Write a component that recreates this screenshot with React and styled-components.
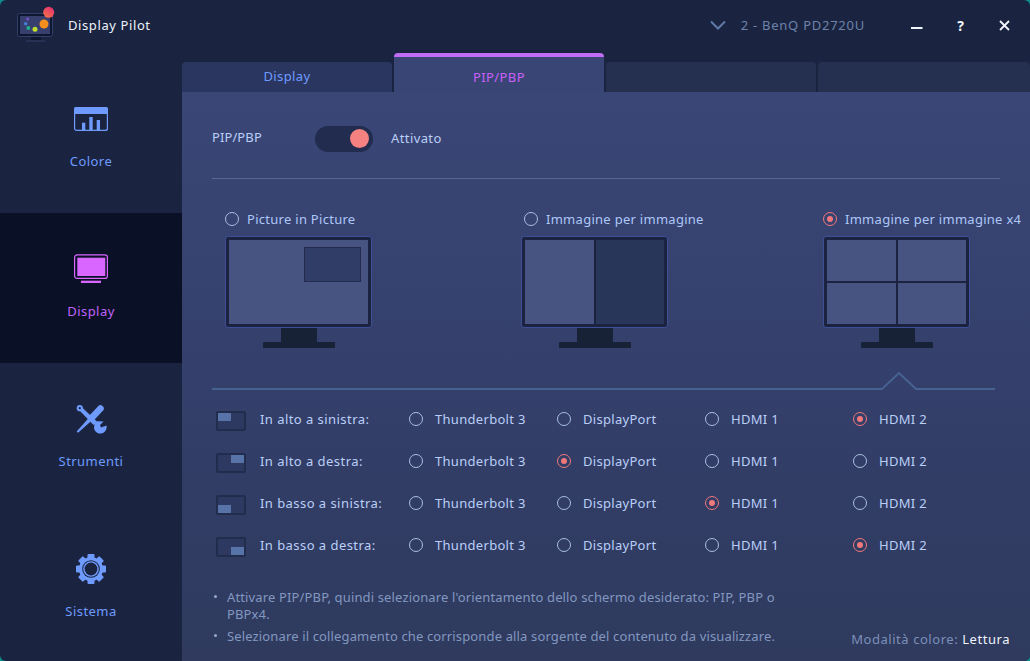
import React from 'react'
import styled, { createGlobalStyle } from 'styled-components'

const GlobalStyle = createGlobalStyle`
    html, body {
        margin: 0;
        padding: 0;
        width: 1030px;
        height: 661px;
        overflow: hidden;
        background: #0b8f8c;
    }
    * { box-sizing: border-box; }
`;

const Window = styled.div`
    display: flex;
    flex-direction: column;
    width: 1030px;
    height: 661px;
    overflow: hidden;
    border-radius: 6px;
    background: #1a2440;
    font-family: "Noto Sans", "Open Sans", sans-serif;
    font-size: 13px;
    color: #b9cff8;
`;

const TitleBar = styled.div`
    display: flex;
    align-items: center;
    height: 53px;
    flex: none;
    padding: 0 19px 3px 16px;
`;

const AppName = styled.div`
    margin-left: 12px;
    margin-top: -1px;
    font-size: 13px;
    letter-spacing: 0.6px;
    color: #eef2fb;
`;

const MonitorSelect = styled.div`
    display: flex;
    align-items: center;
    margin-left: auto;
    margin-top: -1px;
    gap: 15px;
    font-size: 13px;
    letter-spacing: 0.75px;
    color: #6d83ab;
`;

const WindowButtons = styled.div`
    display: flex;
    align-items: center;
    margin-left: 45px;
    gap: 31px;
    color: #f2f5fb;
`;

const WindowGlyph = styled.svg`
    display: block;
    width: 13px;
    height: 13px;
`;

const HelpGlyph = styled.div`
    width: 13px;
    text-align: center;
    font-size: 14px;
    font-weight: 700;
    line-height: 13px;
`;

const Body = styled.div`
    display: flex;
    flex: 1;
    min-height: 0;
`;

const Sidebar = styled.nav`
    display: flex;
    flex-direction: column;
    flex: none;
    width: 182px;
    padding-top: 10px;
`;

const NavItem = styled.div`
    display: flex;
    flex-direction: column;
    align-items: center;
    flex: none;
    height: 150px;
    padding-top: 38px;
    background: ${p => (p.$active ? '#0a1126' : 'transparent')};
    color: ${p => (p.$active ? '#d966ff' : '#6f9bff')};
`;

const NavIcon = styled.svg`
    display: block;
    width: 36px;
    height: 36px;
    flex: none;
`;

const NavLabel = styled.div`
    margin-top: 15px;
    font-size: 13px;
    letter-spacing: 0.45px;
    color: ${p => (p.$active ? '#c061fa' : 'inherit')};
`;

const Main = styled.main`
    display: flex;
    flex-direction: column;
    flex: 1;
    min-width: 0;
`;

const Tabs = styled.div`
    display: flex;
    align-items: flex-end;
    gap: 2px;
    height: 39px;
    flex: none;
`;

const Tab = styled.div`
    display: flex;
    align-items: center;
    justify-content: center;
    flex: ${p => (p.$fill ? '1' : 'none')};
    width: ${p => (p.$fill ? 'auto' : '210px')};
    height: ${p => (p.$active ? '39px' : '30px')};
    padding-bottom: 2px;
    padding-top: ${p => (p.$active ? '6px' : '0')};
    border-radius: 4px 4px 0 0;
    border-top: ${p => (p.$active ? '4px solid #c06cf4' : 'none')};
    background: ${p => (p.$active ? '#394675' : p.$first ? '#2a3660' : '#252f50')};
    color: ${p => (p.$active ? '#c860f8' : '#6f9bff')};
    font-size: 13px;
    letter-spacing: 0.4px;
`;

const Panel = styled.section`
    display: flex;
    flex-direction: column;
    flex: 1;
    min-height: 0;
    padding-left: 30px;
    background: linear-gradient(180deg, #3a4676 0%, #343f6b 50%, #2f3a5e 100%);
`;

const ToggleRow = styled.div`
    display: flex;
    align-items: center;
    height: 27px;
    margin-top: 33px;
`;

const ToggleLabel = styled.div`
    width: 103px;
    margin-top: -4px;
    letter-spacing: 0.1px;
`;

const Switch = styled.div`
    display: flex;
    align-items: center;
    justify-content: flex-end;
    width: 58px;
    height: 26px;
    padding-right: 4px;
    border-radius: 13px;
    background: #222c4f;
`;

const SwitchKnob = styled.div`
    width: 19px;
    height: 19px;
    border-radius: 50%;
    background: #f58280;
`;

const ToggleState = styled.div`
    margin-left: 18px;
    margin-top: -2px;
    letter-spacing: 0.4px;
`;

const Divider = styled.div`
    width: 788px;
    height: 1px;
    margin-top: 26px;
    background: #55698f;
`;

const Modes = styled.div`
    display: flex;
    margin-top: 31px;
    padding-left: 13px;
`;

const Mode = styled.div`
    display: flex;
    flex-direction: column;
    flex: none;
    width: 299px;
`;

const ModeOption = styled.div`
    display: flex;
    align-items: center;
    gap: 8px;
    height: 18px;
    letter-spacing: 0.28px;
    white-space: nowrap;
    color: #adc8f8;
`;

const Radio = styled.span`
    display: flex;
    align-items: center;
    justify-content: center;
    flex: none;
    width: 14px;
    height: 14px;
    border-radius: 50%;
    border: 1px solid ${p => (p.$on ? '#f0787a' : '#a9bfdf')};

    &::after {
        content: '';
        display: ${p => (p.$on ? 'block' : 'none')};
        width: 6px;
        height: 6px;
        border-radius: 50%;
        background: #f0787a;
    }
`;

const Monitor = styled.div`
    display: flex;
    flex-direction: column;
    align-items: center;
    width: 147px;
    margin: 8px 0 0 ${p => p.$shift || 0}px;
`;

const Screen = styled.div`
    position: relative;
    display: grid;
    grid-template-columns: repeat(${p => p.$cols}, 1fr);
    grid-template-rows: repeat(${p => p.$rows}, 1fr);
    gap: ${p => p.$gap || 0}px;
    width: 147px;
    height: 92px;
    padding: 3px;
    border: 1px solid #3d5096;
    border-radius: 3px;
    background: #1c2340;
`;

const Pane = styled.div`
    background: ${p => (p.$dark ? '#283759' : '#475380')};
`;

const Inset = styled.div`
    position: absolute;
    top: 10px;
    right: 10px;
    width: 57px;
    height: 35px;
    border: 1px solid #232c4d;
    background: #303d67;
`;

const StandNeck = styled.div`
    width: 36px;
    height: 14px;
    background: #182236;
`;

const StandBase = styled.div`
    width: 72px;
    height: 6px;
    border-radius: 1px;
    background: #182236;
`;

const Rail = styled.svg`
    display: block;
    width: 783px;
    height: 18px;
    margin-top: 24px;
`;

const SourceTable = styled.div`
    display: flex;
    flex-direction: column;
    gap: 22px;
    margin-top: 19px;
    padding-left: 4px;
`;

const SourceRow = styled.div`
    display: flex;
    align-items: center;
    height: 20px;
`;

const Corner = styled.div`
    position: relative;
    flex: none;
    width: 30px;
    height: 20px;
    margin-top: 4px;
    border: 2px solid #222c4d;
    border-radius: 2px;
    background: #2d3960;

    &::after {
        content: '';
        position: absolute;
        width: 13px;
        height: 8px;
        background: #5873a8;
        ${p => (p.$pos.includes('top') ? 'top: 0;' : 'bottom: 0;')}
        ${p => (p.$pos.includes('left') ? 'left: 0;' : 'right: 0;')}
    }
`;

const RowLabel = styled.div`
    width: 149px;
    margin-left: 14px;
    letter-spacing: 0.45px;
    white-space: nowrap;
`;

const SourceOption = styled.div`
    display: flex;
    align-items: center;
    gap: 12px;
    width: 148px;
    flex: none;
    letter-spacing: 0.3px;
    white-space: nowrap;
`;

const Footer = styled.div`
    display: flex;
    align-items: flex-end;
    justify-content: space-between;
    margin-top: 34px;
    padding-right: 20px;
`;

const Notes = styled.ul`
    width: 590px;
    margin: 0;
    padding: 0;
    list-style: none;
    font-size: 13px;
    letter-spacing: 0.14px;
    line-height: 17px;
    color: #8298c0;
`;

const Note = styled.li`
    position: relative;
    margin-bottom: 5px;
    padding-left: 15px;

    &::before {
        content: '';
        position: absolute;
        left: 2px;
        top: 6px;
        width: 3px;
        height: 3px;
        border-radius: 50%;
        background: #93a8cf;
    }
`;

const ColorMode = styled.div`
    margin-bottom: 2px;
    white-space: nowrap;
    color: #7b90b8;
    letter-spacing: 0.55px;
`;

const ColorModeValue = styled.span`
    color: #eef2fb;
`;

const LogoIcon = () => (
    <svg width="40" height="34" viewBox="0 0 40 34" style={{ display: 'block', overflow: 'visible' }}>
        <defs>
            <linearGradient id="badge" x1="0.8" y1="0" x2="0.2" y2="1">
                <stop offset="0" stopColor="#e8306f" />
                <stop offset="1" stopColor="#f0704a" />
            </linearGradient>
        </defs>
        <rect x="1.500" y="5.500" width="35" height="23" rx="2" fill="#0f1730" stroke="#333e68" />
        <rect x="4" y="8" width="30" height="18" fill="#373f6e" />
        <rect x="15" y="29" width="10" height="3" fill="#0f1730" />
        <rect x="10" y="32.500" width="19" height="1" fill="#333e68" />
        <circle cx="28" cy="16" r="4.500" fill="#f78f1e" />
        <circle cx="19" cy="21.300" r="2.500" fill="#c2de2c" />
        <circle cx="12.300" cy="20" r="2" fill="#1fae8a" />
        <circle cx="9.700" cy="15.700" r="1.700" fill="#4a7fd8" />
        <circle cx="11.700" cy="11" r="1.500" fill="#7a4fc8" />
        <circle cx="32.700" cy="4.300" r="5.500" fill="url(#badge)" />
    </svg>
)

const ColoreIcon = () => (
    <NavIcon viewBox="0 0 36 36">
        <rect x="1.600" y="6.600" width="32.800" height="22.800" rx="2" fill="none" stroke="currentColor" strokeWidth="1.200" />
        <path d="M3 6h30a2 2 0 0 1 2 2v5H1V8a2 2 0 0 1 2-2z" fill="currentColor" />
        <path d="M9 21.700h3.300V29H9zM16.300 16h3.400v13h-3.400zM23.700 19H27v10h-3.300z" fill="currentColor" />
    </NavIcon>
)

const DisplayIcon = () => (
    <NavIcon viewBox="0 0 36 36">
        <rect x="1.600" y="3.900" width="32.800" height="23.500" rx="2.500" fill="none" stroke="currentColor" strokeWidth="1.200" />
        <rect x="4.300" y="6.700" width="28" height="18.300" fill="currentColor" />
        <rect x="8" y="29.700" width="20" height="2.300" fill="currentColor" />
    </NavIcon>
)

const StrumentiIcon = () => (
    <NavIcon viewBox="0 0 36 36">
        <path d="M27.500 7.500L19.500 16" stroke="currentColor" strokeWidth="6.500" strokeLinecap="round" fill="none" />
        <path d="M17 15.500l3 3L5 31.800l-1.300-1.300z" fill="currentColor" />
        <path d="M5.500 8.500l2.800-2.800L24 20.500 20.500 24z" fill="currentColor" />
        <circle cx="6.800" cy="7.200" r="3.100" fill="currentColor" />
        <circle cx="6.800" cy="7.200" r="1.100" fill="#1a2440" />
        <path d="M21.500 22.500L24 20.200 30.500 20.500 27 24l1 2.500 5.500-2a6.500 6.500 0 0 1-5 8c-3.500.7-7-2-7.500-5.500z" fill="currentColor" />
    </NavIcon>
)

const SistemaIcon = () => (
    <NavIcon viewBox="0 0 36 36">
        {[0, 45, 90, 135].map(angle => (
            <rect key={angle} x="14.500" y="3" width="7" height="30" rx="1" fill="currentColor" transform={`rotate(${angle} 18 18)`} />
        ))}
        <circle cx="18" cy="18" r="12" fill="currentColor" />
        <circle cx="18" cy="18" r="8.800" fill="#1a2440" />
        <circle cx="18" cy="18" r="7.800" fill="currentColor" />
        <circle cx="18" cy="18" r="6.400" fill="#1a2440" />
    </NavIcon>
)

const sources = ['Thunderbolt 3', 'DisplayPort', 'HDMI 1', 'HDMI 2']

const rows = [
    { label: 'In alto a sinistra:', pos: 'top-left', selected: 3 },
    { label: 'In alto a destra:', pos: 'top-right', selected: 1 },
    { label: 'In basso a sinistra:', pos: 'bottom-left', selected: 2 },
    { label: 'In basso a destra:', pos: 'bottom-right', selected: 3 },
]

const App = () => {
    return (
        <Window>
            <GlobalStyle />
            <TitleBar>
                <LogoIcon />
                <AppName>Display Pilot</AppName>
                <MonitorSelect>
                    <svg width="16" height="10" viewBox="0 0 16 10" fill="none" stroke="#5f7aa6" strokeWidth="2">
                        <path d="M1 1.500l7 7 7-7" />
                    </svg>
                    2 - BenQ PD2720U
                </MonitorSelect>
                <WindowButtons>
                    <WindowGlyph viewBox="0 0 13 13" fill="none" stroke="currentColor" strokeWidth="2">
                        <path d="M1 9h11.500" />
                    </WindowGlyph>
                    <HelpGlyph>?</HelpGlyph>
                    <WindowGlyph viewBox="0 0 13 13" fill="none" stroke="currentColor" strokeWidth="1.800">
                        <path d="M2 2l9 9M11 2l-9 9" />
                    </WindowGlyph>
                </WindowButtons>
            </TitleBar>
            <Body>
                <Sidebar>
                    <NavItem><ColoreIcon /><NavLabel>Colore</NavLabel></NavItem>
                    <NavItem $active><DisplayIcon /><NavLabel $active>Display</NavLabel></NavItem>
                    <NavItem><StrumentiIcon /><NavLabel>Strumenti</NavLabel></NavItem>
                    <NavItem><SistemaIcon /><NavLabel>Sistema</NavLabel></NavItem>
                </Sidebar>
                <Main>
                    <Tabs>
                        <Tab $first>Display</Tab>
                        <Tab $active>PIP/PBP</Tab>
                        <Tab />
                        <Tab $fill />
                    </Tabs>
                    <Panel>
                        <ToggleRow>
                            <ToggleLabel>PIP/PBP</ToggleLabel>
                            <Switch><SwitchKnob /></Switch>
                            <ToggleState>Attivato</ToggleState>
                        </ToggleRow>
                        <Divider />
                        <Modes>
                            <Mode>
                                <ModeOption><Radio />Picture in Picture</ModeOption>
                                <Monitor>
                                    <Screen $cols={1} $rows={1}>
                                        <Pane />
                                        <Inset />
                                    </Screen>
                                    <StandNeck />
                                    <StandBase />
                                </Monitor>
                            </Mode>
                            <Mode>
                                <ModeOption><Radio />Immagine per immagine</ModeOption>
                                <Monitor $shift={-3}>
                                    <Screen $cols={2} $rows={1} $gap={2}>
                                        <Pane />
                                        <Pane $dark />
                                    </Screen>
                                    <StandNeck />
                                    <StandBase />
                                </Monitor>
                            </Mode>
                            <Mode>
                                <ModeOption><Radio $on />Immagine per immagine x4</ModeOption>
                                <Monitor>
                                    <Screen $cols={2} $rows={2} $gap={2}>
                                        <Pane />
                                        <Pane />
                                        <Pane />
                                        <Pane />
                                    </Screen>
                                    <StandNeck />
                                    <StandBase />
                                </Monitor>
                            </Mode>
                        </Modes>
                        <Rail viewBox="0 0 783 18" fill="none" stroke="#466291" strokeWidth="2">
                            <path d="M0 17h670l17-16 17 16h79" />
                        </Rail>
                        <SourceTable>
                            {rows.map(row => (
                                <SourceRow key={row.label}>
                                    <Corner $pos={row.pos} />
                                    <RowLabel>{row.label}</RowLabel>
                                    {sources.map((source, i) => (
                                        <SourceOption key={source}>
                                            <Radio $on={row.selected === i} />
                                            {source}
                                        </SourceOption>
                                    ))}
                                </SourceRow>
                            ))}
                        </SourceTable>
                        <Footer>
                            <Notes>
                                <Note>Attivare PIP/PBP, quindi selezionare l'orientamento dello schermo desiderato: PIP, PBP o PBPx4.</Note>
                                <Note>Selezionare il collegamento che corrisponde alla sorgente del contenuto da visualizzare.</Note>
                            </Notes>
                            <ColorMode>Modalità colore: <ColorModeValue>Lettura</ColorModeValue></ColorMode>
                        </Footer>
                    </Panel>
                </Main>
            </Body>
        </Window>
    )
}

export default App
